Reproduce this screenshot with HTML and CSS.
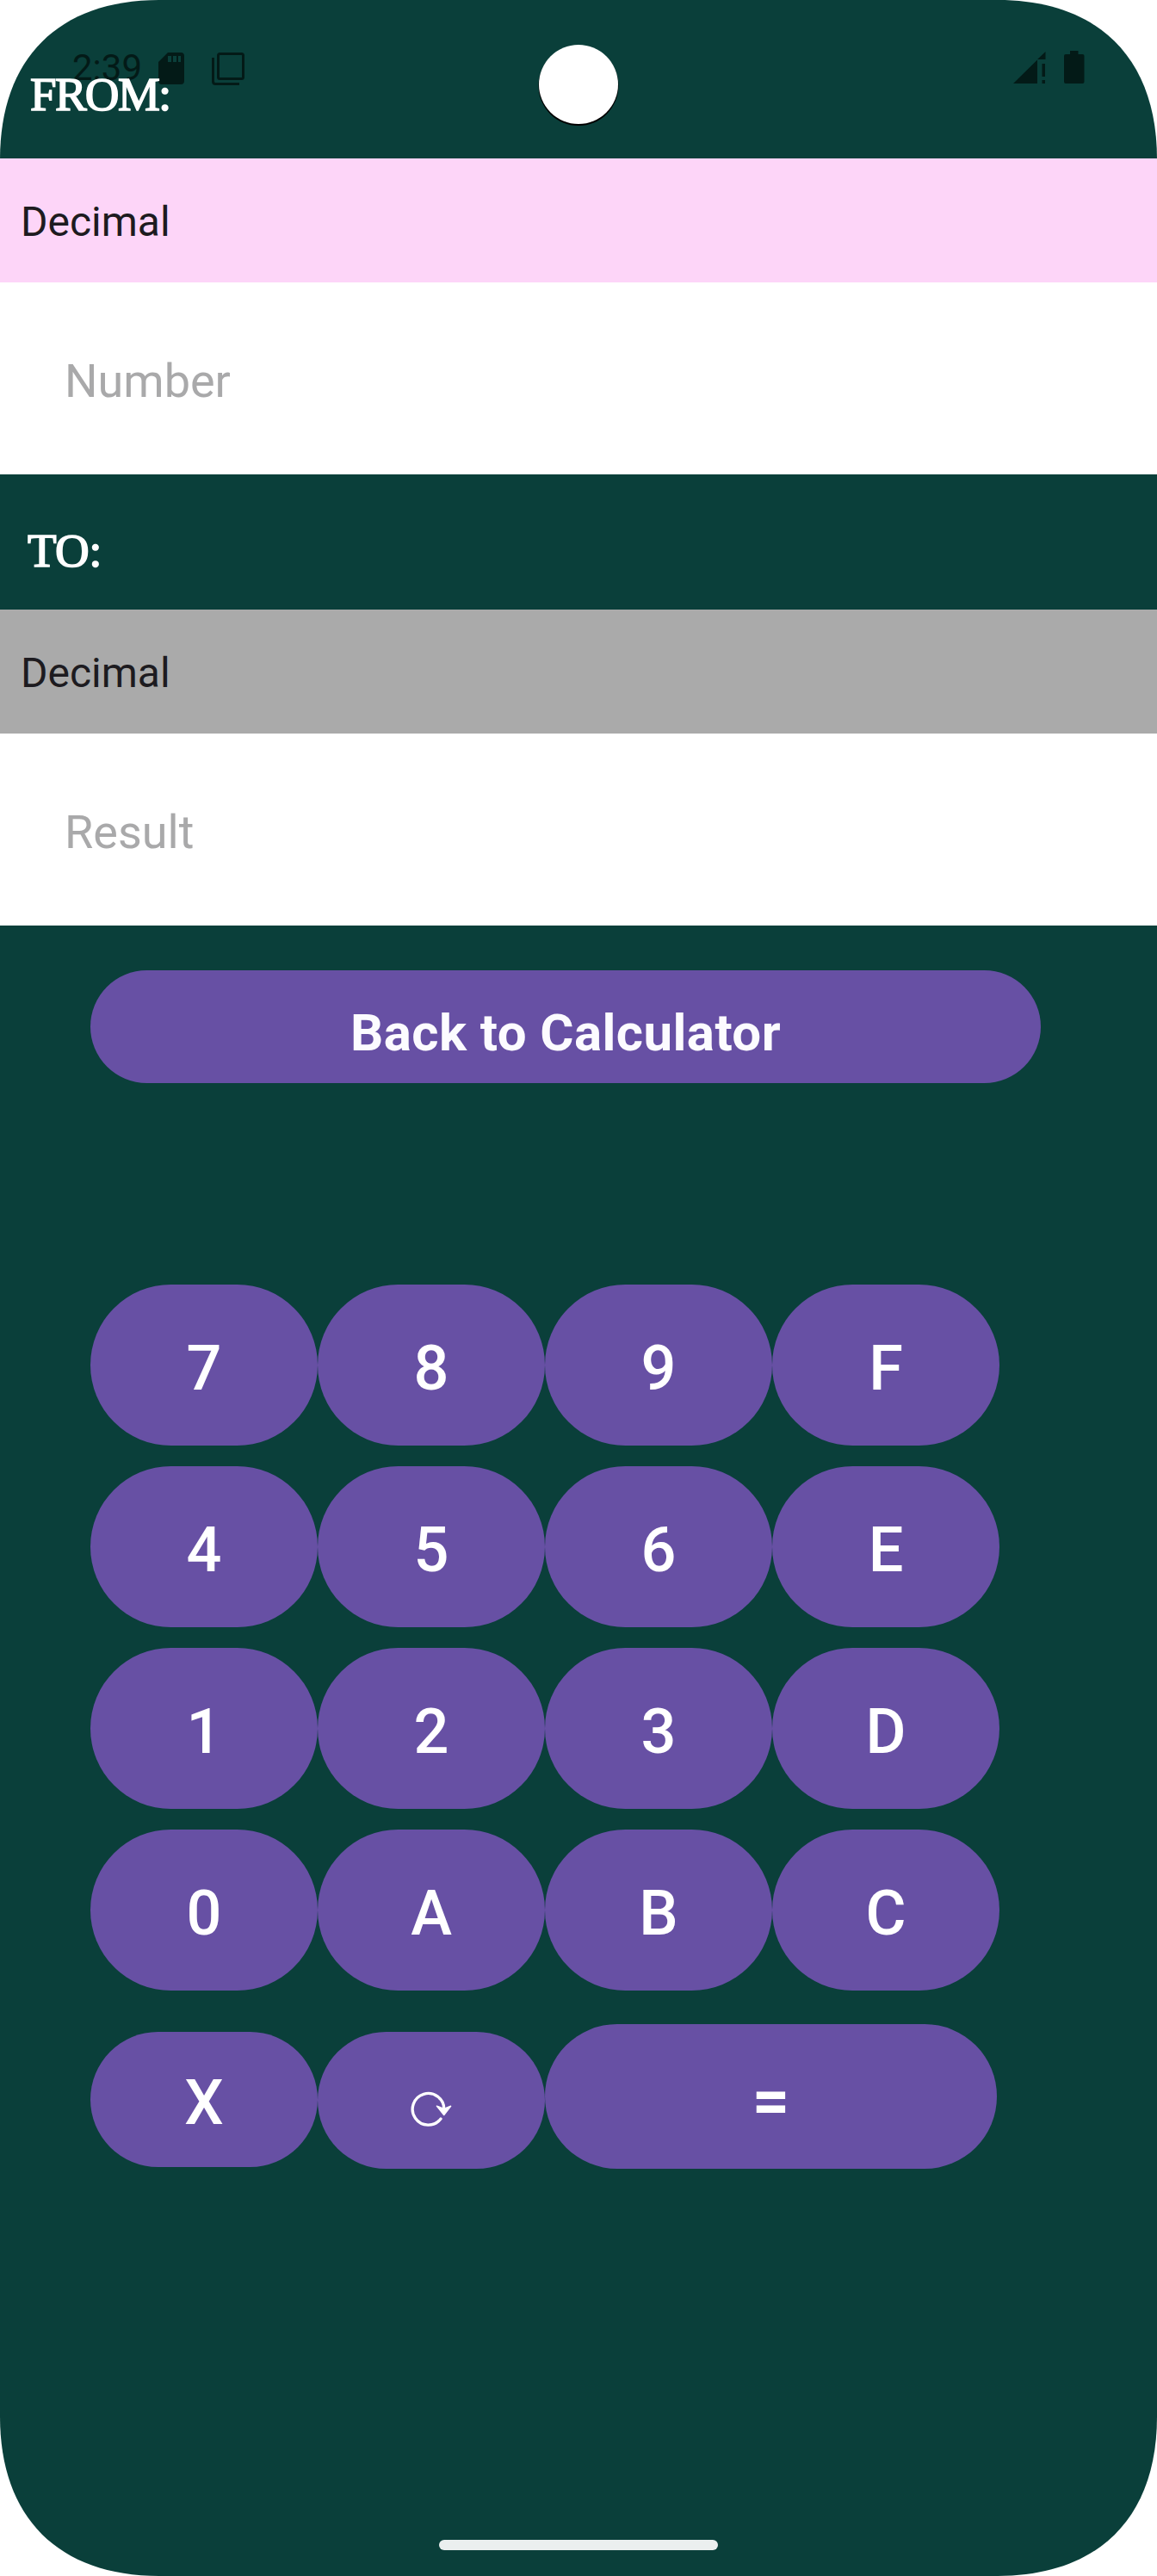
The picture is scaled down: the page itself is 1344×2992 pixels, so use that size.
FILE: index.html
```html
<!DOCTYPE html>
<html lang="en">
<head>
<meta charset="utf-8">
<title>Number converter</title>
<link rel="stylesheet" href="styles.css">
</head>
<body>
<main class="screen">
  <div class="status">
    <span class="time">2:39</span>
    <svg class="icon sd" width="30" height="37" viewBox="0 0 30 37"><path fill-rule="evenodd" d="M11 0H26Q30 0 30 4V33Q30 37 26 37H4Q0 37 0 33V11ZM11 4V11H15V4ZM17 4V11H21V4ZM23 4V11H26V4Z"/></svg>
    <svg class="icon copy" width="38" height="38" viewBox="0 0 38 38"><path class="line" d="M1.5 6V33.500Q1.500 36.500 4.500 36.500H32"/><rect class="line" x="7.500" y="1.500" width="29" height="29" rx="2"/></svg>
    <svg class="icon signal" width="38" height="37" viewBox="0 0 38 37"><path d="M0 37L28 9.500V37ZM28 9L37.500 0V9ZM33.500 14H37V29H33.500ZM33.500 33H37V37H33.500Z"/></svg>
    <svg class="icon battery" width="24" height="38" viewBox="0 0 24 38"><path d="M7 0H16.500V4H21.500Q23.500 4 23.500 6V36Q23.500 38 21.500 38H2Q0 38 0 36V6Q0 4 2 4H7Z"/></svg>
  </div>
  <div class="camera"></div>
  <h2 class="label from">FROM:</h2>
  <div class="select source">Decimal</div>
  <div class="field">Number</div>
  <h2 class="label to">TO:</h2>
  <div class="select target">Decimal</div>
  <div class="field">Result</div>
  <button class="key back">Back to Calculator</button>
  <div class="pad">
    <button class="key">7</button><button class="key">8</button><button class="key">9</button><button class="key">F</button>
    <button class="key">4</button><button class="key">5</button><button class="key">6</button><button class="key">E</button>
    <button class="key">1</button><button class="key">2</button><button class="key">3</button><button class="key">D</button>
    <button class="key">0</button><button class="key">A</button><button class="key">B</button><button class="key">C</button>
  </div>
  <div class="actions">
    <button class="key clear">X</button>
    <button class="key reset" aria-label="Reset"><svg width="50" height="46" viewBox="476 2426 50 46"><path class="arc" d="M512 2461A18.300 18.300 0 1 1 515.800 2450"/><path class="head" d="M507.500 2446.200L515.700 2449.500L523.600 2446.200L515.700 2456.500Z"/></svg></button>
    <button class="key equals">=</button>
  </div>
  <div class="homebar"></div>
</main>
</body>
</html>
```
FILE: styles.css
```css
* { box-sizing: border-box; }

body {
  margin: 0;
  background: #fff;
  font-family: Roboto, sans-serif;
}

.screen {
  position: relative;
  display: flex;
  flex-direction: column;
  width: 1344px;
  height: 2992px;
  background: #0a3f3a;
  clip-path: path("M0 185C0 68 68 0 185 0H1159C1276 0 1344 68 1344 185V2807C1344 2924 1276 2992 1159 2992H185C68 2992 0 2924 0 2807Z");
}

/* System status bar, drawn under the page heading */
.status {
  position: absolute;
  inset: 0 0 auto 0;
  display: flex;
  align-items: flex-start;
  height: 145px;
  padding: 59px 84px 0 84px;
  color: #031a17;
}

.time {
  width: 100px;
  font-size: 42px;
  line-height: 40px;
}

.icon { fill: #031a17; }
.sd { margin-top: 2px; }
.copy { margin: 2px 0 0 32px; }
.signal { margin: 1px 21px 0 auto; }
.line { fill: none; stroke: #031a17; stroke-width: 3; }

.camera {
  position: absolute;
  top: 52px;
  left: 626px;
  width: 92px;
  height: 92px;
  border-radius: 50%;
  background: #fff;
  box-shadow: 0 1.5px 0 0.5px #000;
}

.label {
  position: relative;
  margin: 0;
  color: #fff;
  font: 400 55px/60px "Liberation Serif", serif;
  -webkit-text-stroke: 1.6px #fff;
}

.from {
  height: 184px;
  padding: 80px 0 0 35px;
  letter-spacing: -1.7px;
}

.to {
  height: 157px;
  padding: 59px 0 0 32px;
  letter-spacing: -0.5px;
}

.select {
  height: 144px;
  padding: 2px 24px 0;
  color: #1d1b20;
  font-size: 48px;
  line-height: 144px;
}

.source { background: #fdd5f8; }
.target { background: #aaa; }

.field {
  height: 223px;
  padding: 3px 75px 0;
  background: #fff;
  color: #a9a9aa;
  font-size: 54px;
  line-height: 223px;
}

.key {
  display: flex;
  align-items: center;
  justify-content: center;
  width: 264px;
  height: 187px;
  padding: 9px 0 0;
  border: 0;
  border-radius: 94px;
  background: #6750a4;
  color: #fff;
  font: 500 72px/84px Roboto, sans-serif;
}

.back {
  width: 1104px;
  height: 131px;
  margin: 52px 0 0 105px;
  padding-top: 15px;
  color: #fcfbff;
  font-size: 60px;
  font-weight: 700;
  line-height: 70px;
  letter-spacing: 0.43px;
}

.pad {
  display: grid;
  grid-template-columns: repeat(4, 264px);
  row-gap: 24px;
  margin: 234px 0 0 105px;
}

.actions {
  display: flex;
  align-items: flex-start;
  margin: 39px 0 0 105px;
}

.clear { height: 157px; margin-top: 9px; }
.reset { height: 159px; margin-top: 9px; padding: 18px 0 0; }
.equals { width: 525px; height: 168px; font-size: 76px; font-weight: 700; }

.arc { fill: none; stroke: #fff; stroke-width: 3.3; stroke-linecap: round; }
.head { fill: #fff; stroke: #fff; stroke-width: 1.5; stroke-linejoin: round; }

.homebar {
  width: 324px;
  height: 12px;
  margin: auto auto 30px;
  border-radius: 6px;
  background: #ebefef;
}
```
